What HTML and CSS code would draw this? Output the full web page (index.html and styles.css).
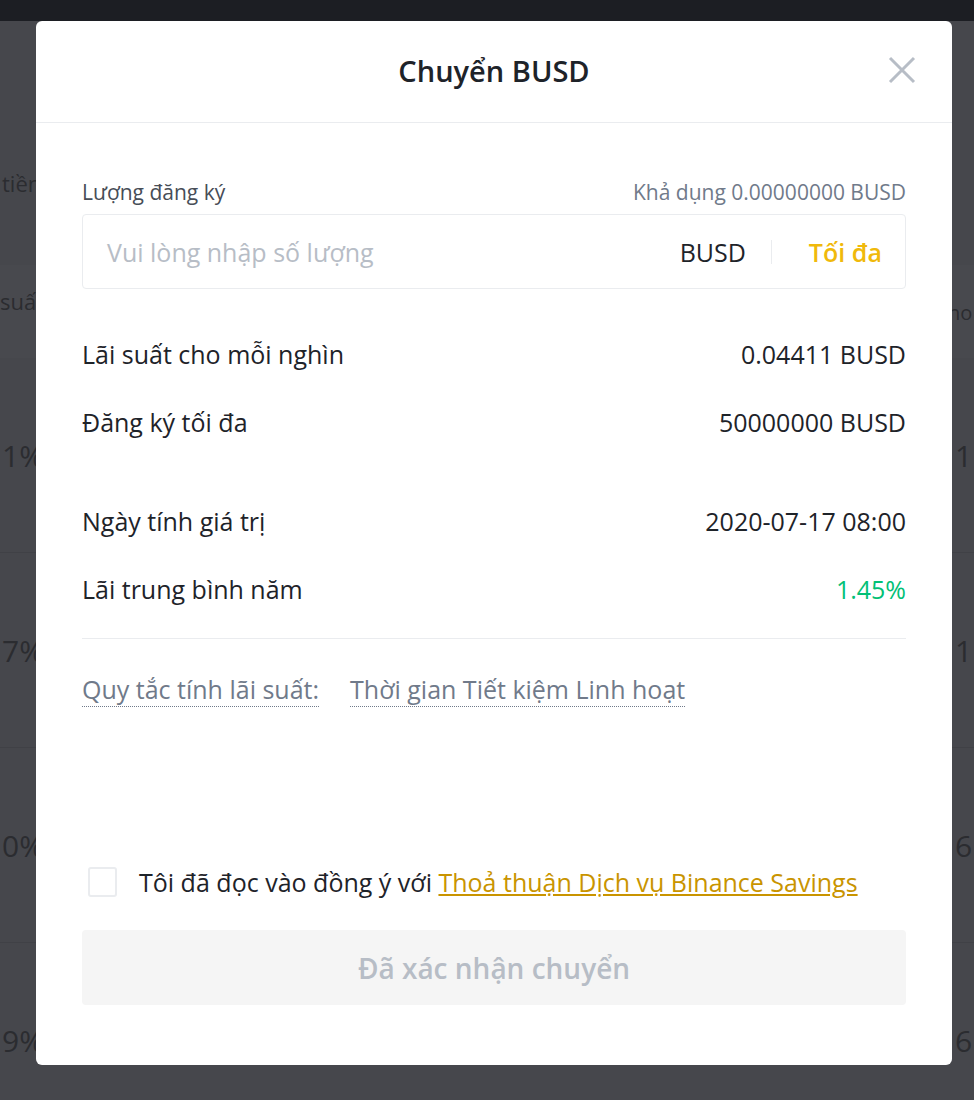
FILE: index.html
```html
<!DOCTYPE html>
<html lang="vi">
<head>
    <meta charset="UTF-8">
    <title>Chuyển BUSD</title>
    <link rel="stylesheet" href="styles.css">
</head>
<body>
<!-- trang phía sau lớp phủ -->
<div class="page">
    <div class="topbar"></div>
    <div class="filter">
        <span class="cellLeft">tiền gửi</span>
    </div>
    <div class="tableHead">
        <span class="cellLeft">suất năm</span>
        <span class="cellRight">no</span>
    </div>
    <ul class="tableBody">
        <li><span class="cellLeft">1%</span><span class="cellRight">1</span></li>
        <li><span class="cellLeft">7%</span><span class="cellRight">1</span></li>
        <li><span class="cellLeft">0%</span><span class="cellRight">6</span></li>
        <li><span class="cellLeft">9%</span><span class="cellRight">6</span></li>
    </ul>
</div>

<div class="modal">
    <div class="modalHead">
        <h2 class="title">Chuyển BUSD</h2>
        <span class="close">
            <svg width="28" height="28" viewBox="0 0 28 28">
                <path d="M2 2 L26 26 M26 2 L2 26" stroke="#b7bdc6" stroke-width="3" fill="none"/>
            </svg>
        </span>
    </div>
    <div class="modalBody">
        <div class="labelRow">
            <span class="label">Lượng đăng ký</span>
            <span class="avail">Khả dụng 0.00000000 BUSD</span>
        </div>
        <div class="inputBox">
            <span class="placeholder">Vui lòng nhập số lượng</span>
            <span class="unit">BUSD</span>
            <span class="split"></span>
            <span class="max">Tối đa</span>
        </div>

        <div class="infoRow">
            <span>Lãi suất cho mỗi nghìn</span>
            <span>0.04411 BUSD</span>
        </div>
        <div class="infoRow">
            <span>Đăng ký tối đa</span>
            <span>50000000 BUSD</span>
        </div>
        <div class="infoRow gapTop">
            <span>Ngày tính giá trị</span>
            <span>2020-07-17 08:00</span>
        </div>
        <div class="infoRow">
            <span>Lãi trung bình năm</span>
            <span class="green">1.45%</span>
        </div>

        <div class="line"></div>

        <div class="rules">
            <span class="dotted">Quy tắc tính lãi suất:</span>
            <span class="dotted">Thời gian Tiết kiệm Linh hoạt</span>
        </div>

        <div class="agree">
            <span class="checkbox"></span>
            <span>Tôi đã đọc vào đồng ý với <a href="#">Thoả thuận Dịch vụ Binance Savings</a></span>
        </div>
        <div class="btn">Đã xác nhận chuyển</div>
    </div>
</div>
</body>
</html>
```

FILE: styles.css
```css
*{
    margin: 0;
    padding: 0;
    box-sizing: border-box;
}
ul,li{
    list-style: none;
}
body{
    background-color: #46474c;
    font-family: "Open Sans", "Noto Sans", sans-serif;
    overflow: hidden;
    height: 1100px;
}
/*背景页面*/
.page{
    color: #2b2c30;
}
.topbar{
    height: 21px;
    background-color: #1c1e23;
}
.page .cellLeft{
    white-space: nowrap;
    margin-left: 2px;
}
.page .cellRight{
    white-space: nowrap;
    margin-left: auto;
    width: 19px;
}
.filter{
    height: 244px;
    padding-top: 147px;
    font-size: 22px;
}
.tableHead{
    height: 93px;
    display: flex;
    font-size: 22px;
    background-color: #48494e;
}
.tableHead .cellLeft{
    margin-top: 21px;
    margin-left: 0;
}
.tableHead .cellRight{
    margin-top: 34px;
    width: 26px;
    font-size: 20px;
}
.tableBody li{
    height: 195px;
    display: flex;
    align-items: center;
    font-size: 30px;
    border-bottom: 1px solid #404146;
}

/*弹窗*/
.modal{
    position: absolute;
    left: 36px;
    top: 21px;
    width: 916px;
    height: 1044px;
    background-color: #fff;
    border-radius: 6px;
    color: #1e2329;
}
.modalHead{
    height: 102px;
    border-bottom: 1px solid #eaecef;
    display: flex;
    align-items: center;
    justify-content: center;
    position: relative;
}
.modalHead .title{
    font-size: 29px;
    font-weight: 600;
    margin-top: -2px;
}
.modalHead .close{
    position: absolute;
    right: 36px;
    top: 35px;
    width: 28px;
    height: 28px;
}
.modalBody{
    padding: 56px 46px 0;
}
.labelRow{
    display: flex;
    justify-content: space-between;
    font-size: 21px;
    line-height: 26px;
}
.labelRow .label{
    color: #474d57;
}
.labelRow .avail{
    color: #707a8a;
}
.inputBox{
    margin-top: 9px;
    height: 75px;
    border: 1px solid #eaecef;
    border-radius: 4px;
    display: flex;
    align-items: center;
    padding: 0 23px 0 24px;
    font-size: 25px;
}
.inputBox .placeholder{
    color: #b7bdc6;
    flex: 1;
}
.inputBox .split{
    width: 1px;
    height: 24px;
    background-color: #eaecef;
    margin: 0 37px 0 25px;
}
.inputBox .max{
    color: #f0b90b;
    font-weight: 600;
}
.infoRow{
    display: flex;
    justify-content: space-between;
    font-size: 25px;
    line-height: 30px;
    margin-top: 38px;
}
.inputBox + .infoRow{
    margin-top: 50px;
}
.infoRow.gapTop{
    margin-top: 69px;
}
.green{
    color: #02c076;
}
.line{
    height: 1px;
    background-color: #eaecef;
    margin-top: 34px;
}
.rules{
    margin-top: 35px;
    display: flex;
    gap: 31px;
    font-size: 25px;
    line-height: 30px;
    color: #707a8a;
}
.rules .dotted{
    border-bottom: 1px dotted #707a8a;
    padding-bottom: 2px;
}
.agree{
    margin-top: 160px;
    display: flex;
    align-items: center;
    font-size: 25px;
    line-height: 30px;
    padding-left: 6px;
}
.agree .checkbox{
    width: 29px;
    height: 30px;
    border: 2px solid #eaecef;
    border-radius: 3px;
    margin-right: 22px;
}
.agree a{
    color: #c99400;
}
.btn{
    margin-top: 33px;
    height: 75px;
    border-radius: 4px;
    background-color: #f5f5f5;
    color: #b7bdc6;
    font-size: 28px;
    font-weight: 600;
    display: flex;
    align-items: center;
    justify-content: center;
}
```
